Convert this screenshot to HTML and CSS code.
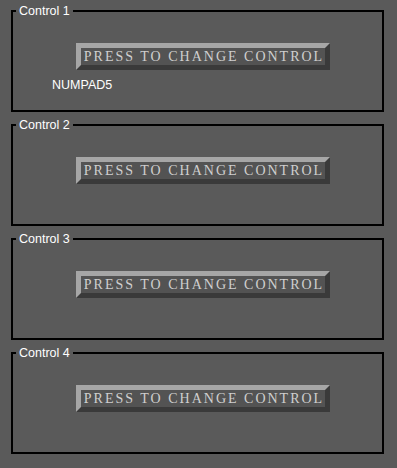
FILE: index.html
```html
<!DOCTYPE html>
<html lang="en">
<head>
    <meta charset="UTF-8">
    <meta name="viewport" content="width=device-width, initial-scale=1.0">
    <title>Controls</title>
    <link rel="stylesheet" href="styles.css">
</head>
<body>
    <fieldset class="panel">
        <legend>Control 1</legend>
        <button class="change-btn">PRESS TO CHANGE CONTROL</button>
        <div class="key-name">NUMPAD5</div>
    </fieldset>
    <fieldset class="panel">
        <legend>Control 2</legend>
        <button class="change-btn">PRESS TO CHANGE CONTROL</button>
    </fieldset>
    <fieldset class="panel">
        <legend>Control 3</legend>
        <button class="change-btn">PRESS TO CHANGE CONTROL</button>
    </fieldset>
    <fieldset class="panel">
        <legend>Control 4</legend>
        <button class="change-btn">PRESS TO CHANGE CONTROL</button>
    </fieldset>
</body>
</html>
```

FILE: styles.css
```css
body {
    margin: 0;
    padding-top: 4px;
    background: #5a5a5a;
    font-family: 'Liberation Sans', Arial, sans-serif;
    font-size: 12.5px;
    color: #fff;
}
.panel {
    display: block;
    box-sizing: border-box;
    height: 108px;
    margin: 0 13px 6px 11px;
    padding: 25px 0 0 0;
    border: 2px solid #000;
    min-inline-size: 0;
}
.panel legend {
    margin-left: 3px;
    padding: 0 3px;
    line-height: 14px;
    color: #fff;
}
.change-btn {
    display: block;
    box-sizing: border-box;
    width: 254px;
    height: 27px;
    margin-left: 63px;
    padding: 0 0 0 2px;
    border: 5px solid;
    border-color: #a6a6a6 #3a3a3a #3a3a3a #a6a6a6;
    background: #535353;
    color: #cfcfcf;
    font-family: 'Liberation Serif', 'Times New Roman', serif;
    font-size: 14px;
    line-height: 17px;
    letter-spacing: 2px;
    white-space: nowrap;
    text-align: center;
    cursor: pointer;
}
.key-name {
    margin: 8px 0 0 39px;
    line-height: 14px;
}
```
